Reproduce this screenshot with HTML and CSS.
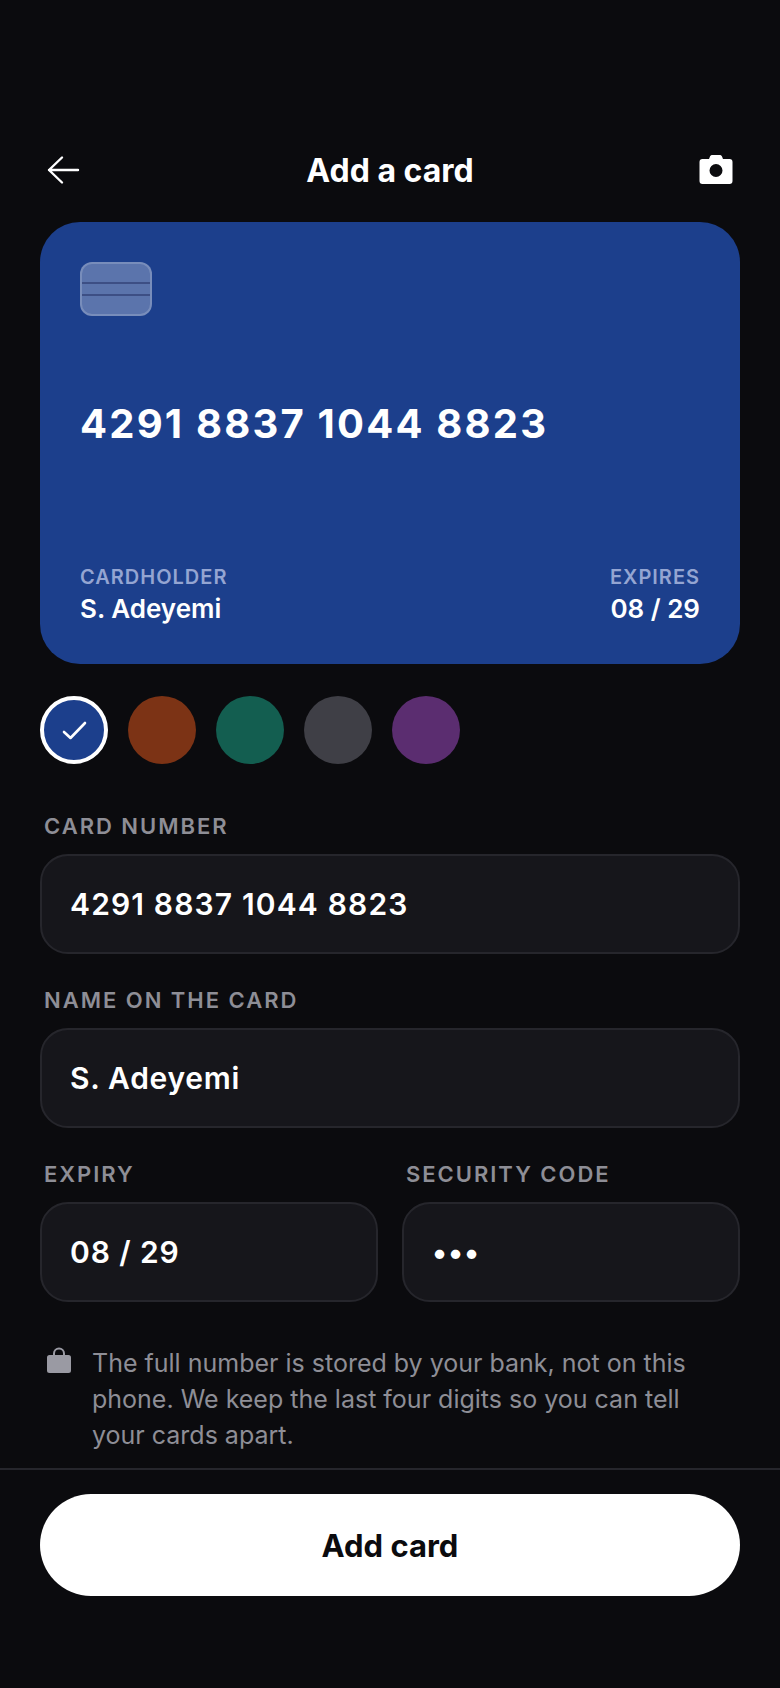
FILE: index.html
```html
<!DOCTYPE html>
<html lang="en">
<head>
<meta charset="utf-8">
<title>Add a card</title>
<link rel="stylesheet" href="styles.css">
</head>
<body>
<main class="screen">
  <header class="topbar">
    <button class="icon-btn" aria-label="Back">
      <svg width="36" height="36" viewBox="0 0 36 36" fill="none" stroke="#fff" stroke-width="2.4" stroke-linecap="round" stroke-linejoin="round"><path d="M32 18H3M16 5.500 3 18l13 12.500"/></svg>
    </button>
    <h1 class="title">Add a card</h1>
    <button class="icon-btn" aria-label="Scan card">
      <svg width="36" height="36" viewBox="0 0 36 36"><path fill="#fff" fill-rule="evenodd" d="M12 4.500c.5-1 1.300-1.500 2.300-1.500h7.400c1 0 1.800.5 2.300 1.500L25 7h6.500a3 3 0 0 1 3 3v19a3 3 0 0 1-3 3h-27a3 3 0 0 1-3-3V10a3 3 0 0 1 3-3H11zM18 12a6.500 6.500 0 1 0 0 13 6.500 6.500 0 0 0 0-13z"/></svg>
    </button>
  </header>

  <section class="card">
    <div class="chip"><span class="chip-line"></span><span class="chip-line"></span></div>
    <div class="card-number">4291 8837 1044 8823</div>
    <div class="card-meta">
      <div>
        <div class="meta-label">CARDHOLDER</div>
        <div class="meta-value">S. Adeyemi</div>
      </div>
      <div class="meta-right">
        <div class="meta-label">EXPIRES</div>
        <div class="meta-value">08 / 29</div>
      </div>
    </div>
  </section>

  <div class="swatches">
    <div class="swatch swatch-blue selected">
      <svg width="28" height="28" viewBox="0 0 28 28" fill="none" stroke="#fff" stroke-width="2.600" stroke-linecap="round" stroke-linejoin="round"><path d="M4 16l6.500 6L25 7"/></svg>
    </div>
    <div class="swatch swatch-rust"></div>
    <div class="swatch swatch-green"></div>
    <div class="swatch swatch-gray"></div>
    <div class="swatch swatch-purple"></div>
  </div>

  <form class="form">
    <div class="field">
      <div class="label">CARD NUMBER</div>
      <div class="input input-card">4291 8837 1044 8823</div>
    </div>
    <div class="field">
      <div class="label">NAME ON THE CARD</div>
      <div class="input input-name">S. Adeyemi</div>
    </div>
    <div class="field-row">
      <div class="field">
        <div class="label">EXPIRY</div>
        <div class="input">08 / 29</div>
      </div>
      <div class="field">
        <div class="label">SECURITY CODE</div>
        <div class="input">•••</div>
      </div>
    </div>
  </form>

  <div class="note">
    <svg class="lock" width="24" height="26" viewBox="0 0 24 26"><path fill="#9a9aa3" d="M6 8V6.500a6 6 0 0 1 12 0V8h3.500A2.500 2.500 0 0 1 24 10.500v13a2.500 2.500 0 0 1-2.500 2.500h-19A2.500 2.500 0 0 1 0 23.500v-13A2.500 2.500 0 0 1 2.500 8zm2 0h8V6.500a4 4 0 0 0-8 0z"/></svg>
    <p class="note-text">The full number is stored by your bank, not on this phone. We keep the last four digits so you can tell your cards apart.</p>
  </div>

  <footer class="footer">
    <button class="primary">Add card</button>
  </footer>
</main>
</body>
</html>
```
FILE: styles.css
```css
* { box-sizing: border-box; }
html, body { margin: 0; padding: 0; background: #0b0b0e; }
body { font-family: Inter, "Liberation Sans", sans-serif; color: #fff; }
.screen { width: 780px; height: 1688px; display: flex; flex-direction: column; }

.topbar { height: 72px; margin-top: 134px; margin-bottom: 16px; padding: 0 46px; display: flex; align-items: center; justify-content: space-between; }
.icon-btn { width: 36px; height: 36px; padding: 0; border: 0; background: none; display: flex; }
.title { margin: 2px 0 0; font-size: 32px; font-weight: 700; line-height: 36px; }

.card { margin: 0 40px; height: 442px; padding: 40px; border-radius: 40px; background: #1c3f8c; display: flex; flex-direction: column; }
.chip { width: 72px; height: 54px; border-radius: 12px; background: rgba(255,255,255,.28); border: 2px solid rgba(255,255,255,.18); padding-top: 18px; display: flex; flex-direction: column; gap: 10px; }
.chip-line { height: 2px; background: #3d4f85; }
.card-number { margin-top: 84px; font-size: 40px; line-height: 48px; font-weight: 700; letter-spacing: 2.200px; }
.card-meta { margin-top: auto; display: flex; justify-content: space-between; position: relative; top: 1px; }
.meta-right { text-align: right; }
.meta-label { font-size: 20px; line-height: 24px; font-weight: 600; letter-spacing: 1px; color: #94a5d2; }
.meta-value { margin-top: 4px; font-size: 26px; line-height: 32px; font-weight: 600; }

.swatches { margin: 32px 40px 0; display: flex; gap: 20px; }
.swatch { width: 68px; height: 68px; border-radius: 50%; display: flex; align-items: center; justify-content: center; }
.selected { border: 4px solid #fff; }
.swatch-blue { background: #1c3f8c; }
.swatch-rust { background: #7c3315; }
.swatch-green { background: #135e50; }
.swatch-gray { background: #3f3f46; }
.swatch-purple { background: #5b2d70; }

.form { margin: 42px 40px 0; display: flex; flex-direction: column; gap: 26px; }
.field { display: flex; flex-direction: column; gap: 8px; flex: 1; min-width: 0; }
.field-row { display: flex; gap: 24px; }
.label { padding-left: 4px; font-size: 22px; line-height: 40px; height: 40px; font-weight: 600; letter-spacing: 1.980px; color: #8e8e96; }
.input { height: 100px; padding: 0 28px; border: 2px solid #26262c; border-radius: 28px; background: #16161b; font-size: 30px; font-weight: 600; letter-spacing: .9px; display: flex; align-items: center; }
.input-card { letter-spacing: 1.150px; }
.input-name { letter-spacing: .7px; }

.note { margin: 43px 40px 0; padding: 0 8px 0 7px; display: flex; gap: 21px; }
.lock { flex: none; margin-top: 2px; }
.note-text { margin: 0; font-size: 25px; line-height: 36px; color: #8e8e96; }

.footer { margin-top: auto; height: 220px; border-top: 2px solid #26262c; padding: 24px 40px 0; }
.primary { width: 100%; height: 102px; border: 0; border-radius: 51px; background: #fff; color: #0b0b0e; font-family: inherit; font-size: 31px; font-weight: 700; }
```
